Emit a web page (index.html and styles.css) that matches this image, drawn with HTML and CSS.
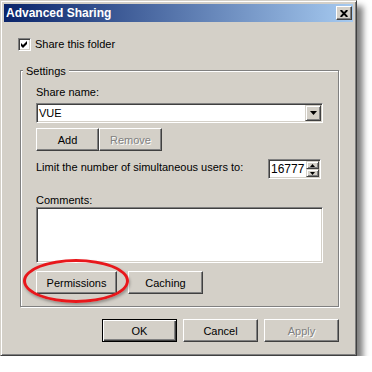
FILE: index.html
```html
<!DOCTYPE html>
<html lang="en">
<head>
    <meta charset="UTF-8">
    <meta name="viewport" content="width=device-width, initial-scale=1.0">
    <title>Advanced Sharing</title>
    <link rel="stylesheet" href="styles.css">
</head>
<body>

    <div class="window">
        <div class="titlebar">
            <span class="title">Advanced Sharing</span>
            <button class="close-btn">
                <svg width="8" height="7" viewBox="0 0 8 7"><path d="M0.7 0 L7.3 7 M7.3 0 L0.7 7" stroke="#000" stroke-width="1.9"/></svg>
            </button>
        </div>

        <div class="content">
            <div class="check-row">
                <span class="checkbox">
                    <svg width="9" height="9" viewBox="0 0 9 9"><polygon points="1,3 3,5 7,1 7,4 3,8 1,6" fill="#000"/></svg>
                </span>
                <span>Share this folder</span>
            </div>

            <div class="group">
                <div class="group-title">Settings</div>

                <div class="field-label">Share name:</div>
                <div class="combo">
                    <span class="combo-text">VUE</span>
                    <span class="combo-btn">
                        <svg width="7" height="4" viewBox="0 0 7 4"><polygon points="0,0 7,0 3.5,4" fill="#000"/></svg>
                    </span>
                </div>

                <div class="btn-row share-btns">
                    <button class="btn small">Add</button>
                    <button class="btn small" disabled>Remove</button>
                </div>

                <div class="limit-row">
                    <span class="limit-label">Limit the number of simultaneous users to:</span>
                    <div class="spin">
                        <span class="spin-text">16777</span>
                        <span class="spin-btns">
                            <span class="spin-btn"><svg width="5" height="3" viewBox="0 0 5 3"><polygon points="2.5,0 5,3 0,3" fill="#000"/></svg></span>
                            <span class="spin-btn"><svg width="5" height="3" viewBox="0 0 5 3"><polygon points="0,0 5,0 2.5,3" fill="#000"/></svg></span>
                        </span>
                    </div>
                </div>

                <div class="field-label comments-label">Comments:</div>
                <div class="textbox"></div>

                <div class="btn-row extra-btns">
                    <div class="highlight-wrap">
                        <button class="btn wide">Permissions</button>
                        <span class="highlight"></span>
                    </div>
                    <button class="btn">Caching</button>
                </div>
            </div>

            <div class="dialog-buttons">
                <button class="btn default">OK</button>
                <button class="btn">Cancel</button>
                <button class="btn" disabled>Apply</button>
            </div>
        </div>
    </div>

</body>
</html>
```

FILE: styles.css
```css
body {
    margin: 0;
    background: #fff;
    font-family: "Liberation Sans", Arial, sans-serif;
    font-size: 11px;
    line-height: 13px;
    color: #000;
}
.window {
    box-sizing: border-box;
    width: 357px;
    height: 356px;
    padding: 3px;
    background: #d4d0c8;
    border: 1px solid;
    border-color: #d4d0c8 #404040 #404040 #d4d0c8;
    box-shadow: inset 1px 1px #fff, inset -1px -1px #808080, 6px 6px 6px rgba(0, 0, 0, 0.5);
}
.titlebar {
    height: 18px;
    display: flex;
    align-items: center;
    justify-content: space-between;
    padding: 0 1px 0 2px;
    background: linear-gradient(to right, #0a246a, #a6caf0);
}
.title {
    color: #fff;
    font-weight: bold;
    font-size: 12px;
}
.close-btn {
    box-sizing: border-box;
    width: 16px;
    height: 14px;
    padding: 0;
    display: flex;
    align-items: center;
    justify-content: center;
    background: #d4d0c8;
    border: 1px solid;
    border-color: #fff #404040 #404040 #fff;
    box-shadow: inset -1px -1px #808080;
}
.content {
    padding: 16px 14px 0 14px;
}
.check-row {
    display: flex;
    align-items: center;
    gap: 4px;
    height: 13px;
}
.checkbox {
    box-sizing: border-box;
    width: 13px;
    height: 13px;
    display: flex;
    align-items: center;
    justify-content: center;
    background: #fff;
    border: 1px solid;
    border-color: #808080 #fff #fff #808080;
    box-shadow: inset 1px 1px #404040, inset -1px -1px #d4d0c8;
}
.group {
    margin: 19px 0 0 2px;
    padding: 0 15px 12px 15px;
    border: 1px solid #808080;
    box-shadow: 1px 1px 0 #fff, inset 1px 1px 0 #fff;
}
.group-title {
    width: fit-content;
    margin: -6px 0 0 -13px;
    padding: 0 3px;
    background: #d4d0c8;
}
.field-label {
    margin-top: 8px;
}
.combo {
    box-sizing: border-box;
    height: 20px;
    margin-top: 4px;
    display: flex;
    align-items: center;
    justify-content: space-between;
    background: #fff;
    border: 1px solid;
    border-color: #808080 #fff #fff #808080;
    box-shadow: inset 1px 1px #404040, inset -1px -1px #d4d0c8;
    padding: 1px 1px 1px 2px;
}
.combo-btn {
    box-sizing: border-box;
    width: 16px;
    height: 16px;
    display: flex;
    align-items: center;
    justify-content: center;
    background: #d4d0c8;
    border: 1px solid;
    border-color: #d4d0c8 #404040 #404040 #d4d0c8;
    box-shadow: inset 1px 1px #fff, inset -1px -1px #808080;
}
.btn-row {
    display: flex;
}
.share-btns {
    margin-top: 5px;
}
.btn {
    box-sizing: border-box;
    width: 75px;
    height: 23px;
    padding: 0;
    font-family: inherit;
    font-size: 11px;
    color: #000;
    background: #d4d0c8;
    border: 1px solid;
    border-color: #fff #404040 #404040 #fff;
    box-shadow: inset -1px -1px #808080;
}
.btn.small {
    width: 63px;
}
.btn.wide {
    width: 81px;
}
.btn:disabled {
    color: #808080;
    text-shadow: 1px 1px #fff;
}
.btn.default {
    border-color: #000;
    box-shadow: inset 1px 1px #fff, inset -1px -1px #404040, inset -2px -2px #808080;
}
.limit-row {
    margin-top: 8px;
    display: flex;
    align-items: center;
    justify-content: space-between;
}
.limit-label {
    margin-bottom: 3px;
}
.spin {
    box-sizing: border-box;
    width: 53px;
    height: 20px;
    margin-right: 2px;
    display: flex;
    background: #fff;
    border: 1px solid;
    border-color: #808080 #fff #fff #808080;
    box-shadow: inset 1px 1px #404040, inset -1px -1px #d4d0c8;
    padding: 1px;
}
.spin-text {
    flex: 1;
    white-space: nowrap;
    font-size: 12px;
    padding: 2px 0 0 1px;
}
.spin-btns {
    display: flex;
    flex-direction: column;
    width: 13px;
}
.spin-btn {
    box-sizing: border-box;
    height: 8px;
    display: flex;
    align-items: center;
    justify-content: center;
    background: #d4d0c8;
    border: 1px solid;
    border-color: #d4d0c8 #404040 #404040 #d4d0c8;
    box-shadow: inset 1px 1px #fff, inset -1px -1px #808080;
}
.comments-label {
    margin-top: 15px;
}
.textbox {
    box-sizing: border-box;
    height: 56px;
    background: #fff;
    border: 1px solid;
    border-color: #808080 #fff #fff #808080;
    box-shadow: inset 1px 1px #404040, inset -1px -1px #d4d0c8;
}
.extra-btns {
    margin-top: 8px;
    gap: 11px;
}
.highlight-wrap {
    position: relative;
    display: flex;
}
.highlight {
    position: absolute;
    left: -13px;
    top: -12px;
    box-sizing: border-box;
    width: 106px;
    height: 44px;
    border: 3px solid #e8171b;
    border-radius: 50%;
    box-shadow: 1px 2px 3px rgba(0, 0, 0, 0.3);
}
.dialog-buttons {
    margin-top: 12px;
    display: flex;
    justify-content: flex-end;
    gap: 6px;
}
```
